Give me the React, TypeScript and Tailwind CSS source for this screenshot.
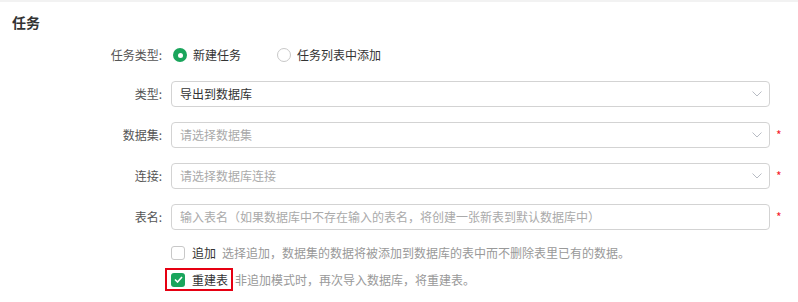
import React from 'react'

const font = { fontFamily: '"Noto Sans CJK SC", "Noto Sans", sans-serif' }

const Chevron = () => (
  <svg width="10" height="6" viewBox="0 0 10 6" className="shrink-0">
    <path d="M0.5 0.5 L5 5 L9.5 0.5" fill="none" stroke="#b8bcc4" strokeWidth="1" />
  </svg>
)

const Required = () => <span className="ml-[6px] text-[12px] leading-none text-[#f5222d]">*</span>

interface RowProps {
  label: string
  children: React.ReactNode
  required?: boolean
  className?: string
}

const Row = ({ label, children, required, className = '' }: RowProps) => (
  <div className={`flex items-center h-[26px] ${className}`}>
    <div className="w-[163px] shrink-0 text-right text-[12px] text-[#555] pr-[1px]">{label}</div>
    <div className="ml-2 flex items-center">
      {children}
      {required && <Required />}
    </div>
  </div>
)

const Select = ({ value, placeholder }: { value?: string; placeholder?: string }) => (
  <div className="w-[599px] h-[26px] border border-[#d3d3d3] rounded-[4px] flex items-center justify-between pl-2 pr-[7px] bg-white">
    <span className={`text-[12px] ${value ? 'text-[#333]' : 'text-[#aaa]'}`}>{value || placeholder}</span>
    <Chevron />
  </div>
)

const Radio = ({ checked, label }: { checked?: boolean; label: string }) => (
  <div className="flex items-center">
    {checked ? (
      <span className="w-[14px] h-[14px] rounded-full bg-[#1aa55c] flex items-center justify-center">
        <span className="w-[5px] h-[5px] rounded-full bg-white" />
      </span>
    ) : (
      <span className="w-[14px] h-[14px] rounded-full border border-[#c8c8c8] bg-white" />
    )}
    <span className="ml-[6px] text-[12px] text-[#333]">{label}</span>
  </div>
)

const Checkbox = ({ checked }: { checked?: boolean }) =>
  checked ? (
    <span className="w-[14px] h-[14px] rounded-[3px] bg-[#1aa55c] flex items-center justify-center">
      <svg width="9" height="7" viewBox="0 0 9 7">
        <path d="M1 3.5 L3.5 6 L8 1" fill="none" stroke="white" strokeWidth="1.6" />
      </svg>
    </span>
  ) : (
    <span className="w-[14px] h-[14px] rounded-[3px] border border-[#c8c8c8] bg-white" />
  )

export default function App() {
  return (
    <div className="w-[798px] h-[302px] bg-white border-t-2 border-[#f2f2f2]" style={font}>
      <div className="pt-3 pl-3 text-[14px] leading-[16px] font-bold text-[#333]">任务</div>

      <Row label="任务类型:" className="mt-3">
        <div className="ml-[2px] flex items-center gap-[36px]">
          <Radio checked label="新建任务" />
          <Radio label="任务列表中添加" />
        </div>
      </Row>

      <Row label="类型:" className="mt-[13px]">
        <Select value="导出到数据库" />
      </Row>
      <Row label="数据集:" required className="mt-[15px]">
        <Select placeholder="请选择数据集" />
      </Row>
      <Row label="连接:" required className="mt-[15px]">
        <Select placeholder="请选择数据库连接" />
      </Row>
      <Row label="表名:" required className="mt-[15px]">
        <div className="w-[599px] h-[26px] border border-[#d3d3d3] rounded-[4px] flex items-center pl-2 bg-white">
          <span className="text-[12px] text-[#aaa]">输入表名（如果数据库中不存在输入的表名，将创建一张新表到默认数据库中）</span>
        </div>
      </Row>

      <div className="ml-[171px] mt-[13px] flex items-center h-[20px] text-[12px]">
        <Checkbox />
        <span className="ml-[7px] text-[#333]">追加</span>
        <span className="ml-[6px] text-[#999]">选择追加，数据集的数据将被添加到数据库的表中而不删除表里已有的数据。</span>
      </div>

      <div className="ml-[165px] mt-[5px] flex items-center text-[12px]">
        <span className="flex items-center border-2 border-[#e60012] h-[23px] pl-[4px] pr-[3px]">
          <Checkbox checked />
          <span className="ml-[7px] text-[#333]">重建表</span>
        </span>
        <span className="ml-[2px] text-[#999]">非追加模式时，再次导入数据库，将重建表。</span>
      </div>
    </div>
  )
}
